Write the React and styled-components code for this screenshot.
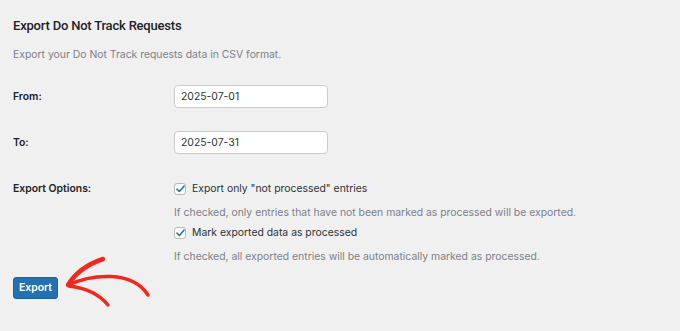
import React from 'react';
import styled, { createGlobalStyle } from 'styled-components';

// --- GLOBAL ---
const GlobalStyle = createGlobalStyle`
  html, body { margin: 0; padding: 0; background: #f0f0f1; }
  body { font-family: Inter, "Liberation Sans", Arial, sans-serif; color: #1d2327; }
  * { box-sizing: border-box; }
`;

const body = `Inter, "Liberation Sans", Arial, sans-serif`;

// --- STYLED COMPONENTS ---
const Page = styled.div`
  position: relative;
  width: 680px; height: 331px;
  padding: 16px 13px 0;
`;
const Title = styled.h2`
  margin: 0; font-family: Roboto, "Liberation Sans", Arial, sans-serif;
  font-size: 13px; letter-spacing: -0.2px; line-height: 20px; font-weight: 500; color: #1d2327;
`;
const Intro = styled.p`
  margin: 11px 0 0; font-size: 10.4px; line-height: 16px; color: #7c8087;
`;
const FormGrid = styled.div`
  display: grid; grid-template-columns: 161px 1fr;
  margin-top: 22px; row-gap: 23px;
`;
const Label = styled.div`
  font-size: 10.4px; font-weight: 600; line-height: 20px; color: #1d2327;
  align-self: ${p => (p.$top ? 'start' : 'center')};
  margin-top: ${p => (p.$top ? '2px' : '0')};
`;
const DateInput = styled.input`
  width: 154px; height: 23px; padding: 0 6px;
  border: 1px solid #c9cbcf; border-radius: 4px; background: #fff;
  font: 10.4px ${body}; color: #2c3338;
  outline: none;
`;
const Options = styled.div`
  display: flex; flex-direction: column; margin-top: 2px;
`;
const CheckRow = styled.label`
  display: flex; align-items: center; gap: 6px;
  font-size: 10.4px; line-height: 20px; color: #2c3338;
`;
const Box = styled.span`
  width: 12px; height: 12px; flex-shrink: 0;
  border: 1px solid #b5b8bd; border-radius: 3px; background: #fff;
  display: flex; align-items: center; justify-content: center;
`;
const Hint = styled.p`
  margin: 5px 0 0; font-size: 10.4px; line-height: 18px; color: #7c8087;
  & + label { margin-top: 1px; }
`;
const Actions = styled.div`
  margin-top: 9px;
`;
const Button = styled.button`
  height: 22px; padding: 0 5px;
  background: #2271b1; border: 1px solid #1d5f96; border-radius: 3px;
  color: #fff; font: 600 10.4px ${body};
`;
const Annotation = styled.svg`
  position: absolute; left: 60px; top: 250px; overflow: visible;
  pointer-events: none;
`;

const Check = ({ label }) => (
  <CheckRow>
    <Box>
      <svg width="9" height="8" viewBox="0 0 9 8">
        <path d="M1 4.2 L3.4 6.5 L8 1.2" fill="none" stroke="#2271b1" strokeWidth="1.6" strokeLinecap="round" strokeLinejoin="round" />
      </svg>
    </Box>
    {label}
  </CheckRow>
);

// --- The Main Component ---
const App = () => (
  <>
    <GlobalStyle />
    <Page>
      <Title>Export Do Not Track Requests</Title>
      <Intro>Export your Do Not Track requests data in CSV format.</Intro>
      <FormGrid>
        <Label>From:</Label>
        <DateInput defaultValue="2025-07-01" />
        <Label>To:</Label>
        <DateInput defaultValue="2025-07-31" />
        <Label $top>Export Options:</Label>
        <Options>
          <Check label={'Export only "not processed" entries'} />
          <Hint>If checked, only entries that have not been marked as processed will be exported.</Hint>
          <Check label="Mark exported data as processed" />
          <Hint>If checked, all exported entries will be automatically marked as processed.</Hint>
        </Options>
      </FormGrid>
      <Actions>
        <Button>Export</Button>
      </Actions>
      <Annotation width="100" height="60" viewBox="60 250 100 60">
        <g fill="none" stroke="#f2281d" strokeLinecap="round" strokeLinejoin="round">
          <path d="M68 285 Q79 267 103 259" strokeWidth="4.5" />
          <path d="M68 285 C92 274 132 270 148 295" strokeWidth="3.5" />
          <path d="M69 286 C86 288 100 295 108 305" strokeWidth="3.5" />
        </g>
      </Annotation>
    </Page>
  </>
);

export default App;
